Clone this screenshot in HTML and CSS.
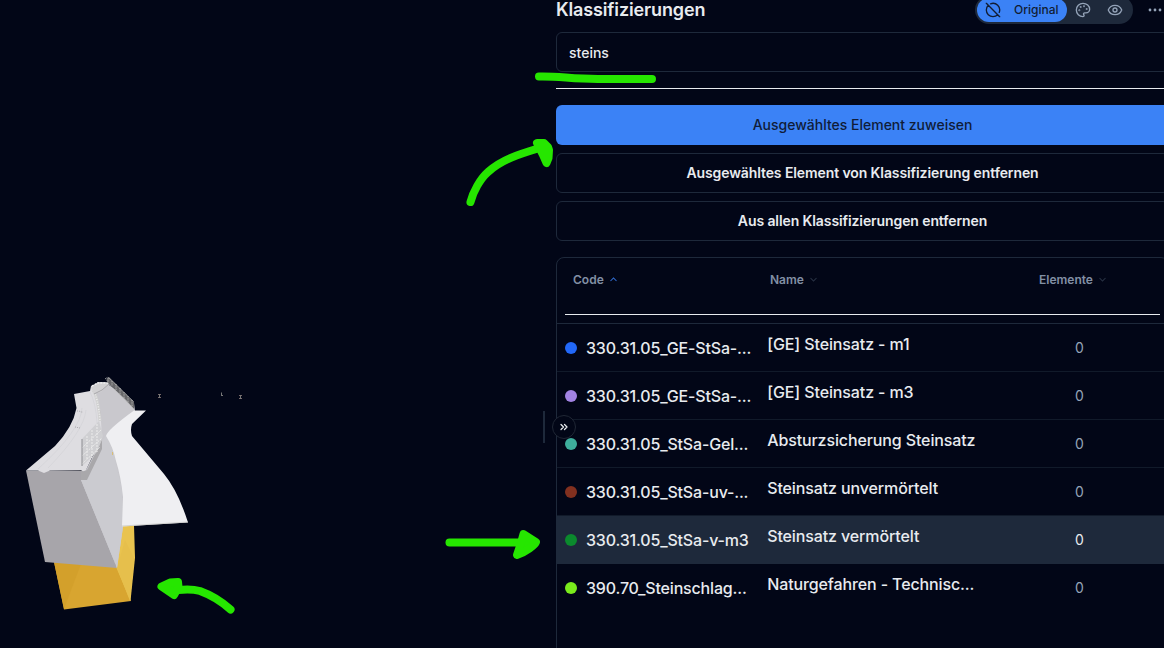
FILE: index.html
```html
<!DOCTYPE html>
<html lang="de">
<head>
<meta charset="utf-8">
<title>Klassifizierungen</title>
<link rel="stylesheet" href="styles.css">
</head>
<body>
<div class="app">
  <main class="viewer">
    <svg class="model" viewBox="0 0 544 648" width="544" height="648">
      <path d="M54 562L117 566L131 601L64 609.5Z" fill="#d8a530"/>
      <path d="M54 562L81 564L64 609Z" fill="#d3a02b"/>
      <path d="M122 525H134L135 558L130.500 601L116.500 568Z" fill="#e9c34f"/>
      <path d="M134 558L130 601L117 568L125 540Z" fill="#e6bf4c"/>
      <path d="M26 470.500H84L117 568L45 562Z" fill="#a7a5aa"/>
      <path d="M105 382L134 403L135 411L112 434L120 466L124 497L123 527L117 568L81 480L87 468L101 440L100 410L94 393Z" fill="#c9c8cd"/>
      <path d="M107 434L114 455L122 490L123 527L117 568L81 480L101 443Z" fill="#cbcbd0"/>
      <path d="M26 470.500L55 446Q73 427 76.500 408L74 394L90 391L91 386L101 382L109 383L96 393Q103 418 101 439L87 468L85 473L81 470L50 470.500L44 473L38 470.500Z" fill="#dedde1"/>
      <path d="M82 408Q81 430 38 469M86 410Q84 431 48 468M90 392Q96 404 97 423" fill="none" stroke="#d3d2d7" stroke-width=".7"/>
      <path d="M81 472L87 470L102 440V449L87 480H81Z" fill="#a9a8ab"/>
      <path d="M93 390Q98 397 100 421" fill="none" stroke="#d0d0d0" stroke-width="3"/>
      <path d="M93 390Q98 397 100 421" fill="none" stroke="#ededed" stroke-width="1.500" stroke-dasharray="1 1.500"/>
      <path d="M82 439L99 421L103 436L97 452L82 466Z" fill="#cfcfd2"/>
      <path d="M82 448L101 430M82 456L102 438M82 464L100 447M87 436V460M92 430V458M97 424V452" fill="none" stroke="#ececec" stroke-width="1" stroke-dasharray="2 1"/>
      <path d="M82 439V466" stroke="#8d8d91"/>
      <path d="M91 387L98 382L109 383L101 392L94 394" fill="#d2d1d3"/>
      <path d="M92 386L98 383L108 383" fill="none" stroke="#eeeeef" stroke-width="1.500" stroke-dasharray="2 1"/>
      <path d="M94 394L102 390L109 384" fill="none" stroke="#a9a8ac"/>
      <path d="M106 380L109 377L134 402V409L126 400L108 383Z" fill="#67676a"/>
      <path d="M105 379L108 377L134 402M108 383L134 409M108 378V383M112 381V386M116 384V390M120 388V395M124 392V399M128 396V403M132 400V407" fill="none" stroke="#b4b4b4" stroke-width="1" stroke-dasharray="1 .7"/>
      <path d="M134 410.500H146L132 424Q130 430 132 436L164 474Q178 491 188 522.500L122 526.500L123 497Q121 477 116 461Q113 447 106 436Q107 430 134 410.500Z" fill="#efeff2"/>
      <path d="M122 526L188 522" stroke="#ccccc9" stroke-width=".8"/>
      <path d="M112.500 452V455" stroke="#d9bd76"/>
      <path d="M77 411H79L81 412H83M75 427L80 428" fill="none" stroke="#aaa9ae" stroke-dasharray="1 1"/>
      <g class="marks" fill="none">
        <path d="M158 394.500H161M158 397.500H161M239 395.500H242M239 398.500H242" stroke="#766766"/>
        <path d="M159.500 394V398M240.500 395V399M221.500 392.500V396M221 395.500H223" stroke="#777"/>
      </g>
    </svg>
  </main>
  <div class="resizer"></div>
  <aside class="panel">
    <header class="panel-head">
      <h2 class="title">Klassifizierungen</h2>
      <div class="tools">
        <div class="segmented">
          <button class="mode"><svg class="icon" viewBox="0 0 24 24"><path d="m2 2 20 20M8.350 2.690A10 10 0 0 1 21.300 15.650M19.080 19.080A10 10 0 1 1 4.920 4.920"/></svg><span>Original</span></button>
          <svg class="icon palette" viewBox="0 0 24 24"><circle cx="13.500" cy="6.500" r=".5"/><circle cx="17.500" cy="10.500" r=".5"/><circle cx="8.500" cy="7.500" r=".5"/><circle cx="6.500" cy="12.500" r=".5"/><path d="M12 2C6.500 2 2 6.500 2 12s4.500 10 10 10c.926 0 1.648-.746 1.648-1.688 0-.437-.18-.835-.437-1.125-.29-.289-.438-.652-.438-1.125a1.640 1.640 0 0 1 1.668-1.668h1.996c3.051 0 5.555-2.503 5.555-5.554C21.965 6.012 17.461 2 12 2z"/></svg>
          <svg class="icon eye" viewBox="0 0 24 24"><path d="M2.062 12.348a1 1 0 0 1 0-.696 10.750 10.750 0 0 1 19.876 0 1 1 0 0 1 0 .696 10.750 10.750 0 0 1-19.876 0"/><circle cx="12" cy="12" r="3"/></svg>
        </div>
        <svg class="icon more" viewBox="0 0 24 24"><circle cx="4.500" cy="12" r="2.100"/><circle cx="12" cy="12" r="2.100"/><circle cx="19.500" cy="12" r="2.100"/></svg>
      </div>
    </header>
    <input class="search" value="steins">
    <hr class="divider">
    <div class="actions">
      <button class="btn primary">Ausgewähltes Element zuweisen</button>
      <button class="btn">Ausgewähltes Element von Klassifizierung entfernen</button>
      <button class="btn">Aus allen Klassifizierungen entfernen</button>
    </div>
    <section class="table">
      <div class="thead">
        <div class="cols heads">
          <div class="th">Code<svg class="chev on" viewBox="0 0 24 24"><path d="m20 16-8-8-8 8"/></svg></div>
          <div class="th">Name<svg class="chev" viewBox="0 0 24 24"><path d="m4 8 8 8 8-8"/></svg></div>
          <div class="th">Elemente<svg class="chev" viewBox="0 0 24 24"><path d="m4 8 8 8 8-8"/></svg></div>
        </div>
      </div>
      <div class="cols row"><div class="code"><i class="dot blue"></i><span>330.31.05_GE-StSa-...</span></div><div class="name">[GE] Steinsatz - m1</div><div class="count">0</div></div>
      <div class="cols row"><div class="code"><i class="dot violet"></i><span>330.31.05_GE-StSa-...</span></div><div class="name">[GE] Steinsatz - m3</div><div class="count">0</div></div>
      <div class="cols row"><div class="code"><i class="dot teal"></i><span>330.31.05_StSa-Gel...</span></div><div class="name">Absturzsicherung Steinsatz</div><div class="count">0</div></div>
      <div class="cols row"><div class="code"><i class="dot red"></i><span>330.31.05_StSa-uv-...</span></div><div class="name">Steinsatz unvermörtelt</div><div class="count">0</div></div>
      <div class="cols row selected"><div class="code"><i class="dot green"></i><span>330.31.05_StSa-v-m3</span></div><div class="name">Steinsatz vermörtelt</div><div class="count">0</div></div>
      <div class="cols row last"><div class="code"><i class="dot lime"></i><span>390.70_Steinschlag...</span></div><div class="name">Naturgefahren - Technisc...</div><div class="count">0</div></div>
    </section>
  </aside>
  <button class="collapse"><svg class="icon" viewBox="0 0 24 24"><path d="m6 17 5-5-5-5M13 17l5-5-5-5"/></svg></button>
  <svg class="ink" viewBox="0 0 1164 648" width="1164" height="648">
    <path d="M539 76.500C560 76 570 79 598 79L652 79"/>
    <path d="M470.500 202C473 192 480 179 488 172C502 159 520 154 543 147"/>
    <path class="solid" d="M537 143L544 143L548 147L549 150L548.500 158L546.500 163L543 155Z"/>
    <path d="M449.500 542.500H522"/>
    <path class="solid" d="M523.500 534L536 542C535 545 526 552 517 555L521 543Z"/>
    <path d="M230.500 609.500C220 600 211 595 200 591C193 589 187 589 178 590"/>
    <path class="solid" d="M161.500 586.500L170 582.500L178 582L178.500 587L174 595Z"/>
  </svg>
</div>
</body>
</html>
```
FILE: styles.css
```css
* { box-sizing: border-box; }
body { margin: 0; background: #020617; color: #e8ebef; font-family: Inter, "Liberation Sans", sans-serif; overflow: hidden; }
button, input { font: inherit; color: inherit; background: none; margin: 0; }
.app { position: relative; display: flex; width: 1164px; height: 648px; overflow: hidden; }
.viewer { width: 543px; flex: none; overflow: hidden; }
.model { display: block; }
.resizer { width: 2px; height: 32px; margin-top: 411px; flex: none; background: #1e293b; }
.panel { flex: none; width: 613px; margin-left: 11px; display: flex; flex-direction: column; }
.icon { width: 16px; height: 16px; flex: none; fill: none; stroke: currentColor; stroke-width: 2; stroke-linecap: round; stroke-linejoin: round; }

.panel-head { height: 32px; flex: none; display: flex; justify-content: space-between; }
.title { margin: -4px 0 0; font-size: 18px; line-height: 28px; font-weight: 600; letter-spacing: -.14px; white-space: nowrap; }
.tools { display: flex; align-items: center; height: 28px; margin-top: -4px; gap: 14px; color: #94a3b8; }
.segmented { display: flex; align-items: center; width: 158px; height: 28px; border-radius: 14px; background: #1e293b; padding-left: 2px; }
.mode { display: flex; align-items: center; gap: 13px; width: 90px; height: 24px; padding: 0 0 1px 8px; border: 0; border-radius: 12px; background: #3b82f6; color: #111c33; font-size: 12px; font-weight: 500; }
.palette { margin-left: 8px; }
.eye { margin-left: 16px; }
.more { width: 16px; margin-right: 6px; }
.more circle { fill: currentColor; stroke: none; }

.search { height: 40px; flex: none; padding: 1px 12px 0; border: 1px solid #1e293b; border-radius: 6px; font-size: 14px; font-weight: 500; letter-spacing: 0; outline: 0; }
.divider { width: 100%; height: 1px; margin: 16px 0; border: 0; flex: none; background: #e8ebef; }
.actions { display: flex; flex-direction: column; gap: 8px; }
.btn { height: 40px; border: 1px solid #1e293b; border-radius: 6px; font-size: 14px; font-weight: 600; letter-spacing: -.1px; padding: 0 0 1px; }
.primary { border: 0; background: #3b82f6; color: #101c38; font-weight: 500; letter-spacing: 0; }

.table { height: 410px; margin-top: 16px; flex: none; border: 1px solid #1e293b; border-radius: 8px 8px 0 0; overflow: hidden; }
.cols { display: grid; grid-template-columns: 202px 264px 1fr; }
.thead { height: 66px; padding: 0 8px 8px; border-bottom: 1px solid #1e293b; }
.heads { height: 57px; border-bottom: 1px solid #e8ebef; }
.th { display: flex; align-items: center; gap: 5px; height: 43px; padding-left: 8px; color: #8290a5; font-size: 12px; font-weight: 600; letter-spacing: 0; }
.th:nth-child(2) { padding-left: 3px; }
.chev { width: 9px; height: 9px; fill: none; stroke: #2b3547; stroke-width: 2.700; }
.chev.on { stroke: #3370d8; }
.row { height: 48px; padding-left: 8px; border-bottom: 1px solid #111a2a; font-size: 16px; font-weight: 500; letter-spacing: -.17px; white-space: nowrap; }
.row.last { border-color: transparent; }
.selected { background: #1e293b; border-color: #1e293b; }
.code { display: flex; align-items: center; gap: 9px; padding-top: 1px; }
.dot { width: 12px; height: 12px; border-radius: 50%; flex: none; }
.blue { background: #2268f8; }
.violet { background: #a283e3; }
.teal { background: #3eae9c; }
.red { background: #82301f; }
.green { background: #0b8a2d; }
.lime { background: #7aeb1c; }
.name { line-height: 24px; padding: 8px 0 0 .2px; letter-spacing: -.12px; }
.count { line-height: 20px; padding: 14px 0 0 44px; font-size: 14px; font-weight: 400; color: #94a3b8; }
.selected .count { color: #e8ebef; }

/* Toggle floats over the panel edge */
.collapse { position: absolute; left: 552px; top: 415px; width: 24px; height: 24px; display: grid; place-items: center; padding: 0; border: 1px solid #202735; border-radius: 50%; background: #020617; }
.collapse .icon { width: 12px; height: 12px; stroke-width: 2.500; }
/* Freehand annotation layer */
.ink { position: absolute; inset: 0; pointer-events: none; fill: none; stroke: #26e600; stroke-width: 8; stroke-linecap: round; stroke-linejoin: round; }
.solid { fill: #26e600; }
```
